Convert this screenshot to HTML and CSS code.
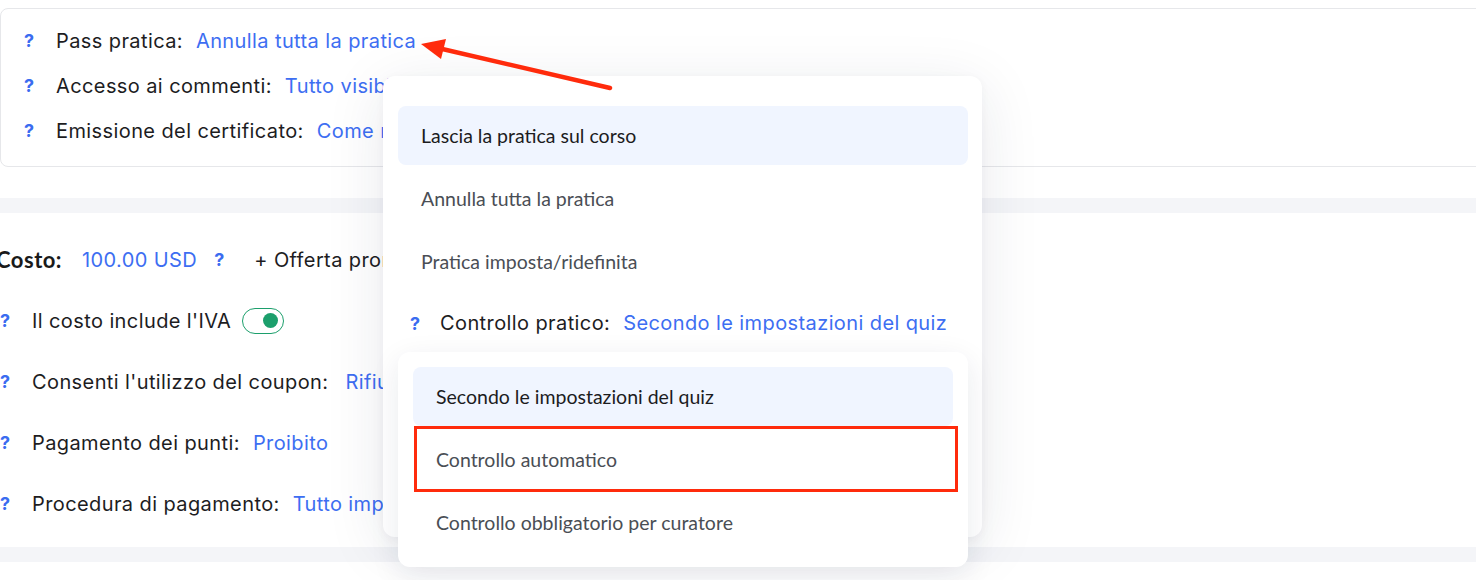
FILE: index.html
```html
<!DOCTYPE html>
<html lang="it">
<head>
<meta charset="utf-8">
<title>Impostazioni corso</title>
<link rel="stylesheet" href="styles.css">
</head>
<body>
<div class="page">
  <section class="card top-card">
    <div class="row">
      <span class="q">?</span>
      <span class="label">Pass pratica:</span>
      <span class="value">Annulla tutta la pratica</span>
    </div>
    <div class="row">
      <span class="q">?</span>
      <span class="label">Accesso ai commenti:</span>
      <span class="value">Tutto visibile</span>
    </div>
    <div class="row">
      <span class="q">?</span>
      <span class="label">Emissione del certificato:</span>
      <span class="value">Come richiesto</span>
    </div>
  </section>

  <div class="band"></div>

  <section class="card2">
    <div class="row2">
      <span class="cost-label">Costo:</span>
      <span class="cost-value">100.00 USD</span>
      <span class="q q-inline">?</span>
      <span class="offer">+ Offerta promozionale</span>
    </div>
    <div class="row2">
      <span class="q">?</span>
      <span class="label">Il costo include l'IVA</span>
      <span class="toggle"><span class="knob"></span></span>
    </div>
    <div class="row2">
      <span class="q">?</span>
      <span class="label">Consenti l'utilizzo del coupon:</span>
      <span class="value value-wide">Rifiutato</span>
    </div>
    <div class="row2">
      <span class="q">?</span>
      <span class="label">Pagamento dei punti:</span>
      <span class="value">Proibito</span>
    </div>
    <div class="row2">
      <span class="q">?</span>
      <span class="label">Procedura di pagamento:</span>
      <span class="value">Tutto impostato</span>
    </div>
  </section>

  <div class="band"></div>

  <div class="dropdown outer">
    <div class="item selected">Lascia la pratica sul corso</div>
    <div class="item">Annulla tutta la pratica</div>
    <div class="item">Pratica imposta/ridefinita</div>
    <div class="ctrl-row">
      <span class="q q-ctrl">?</span>
      <span class="label">Controllo pratico:</span>
      <span class="value">Secondo le impostazioni del quiz</span>
    </div>
    <div class="dropdown inner">
      <div class="item selected">Secondo le impostazioni del quiz</div>
      <div class="item marked">Controllo automatico</div>
      <div class="item">Controllo obbligatorio per curatore</div>
    </div>
  </div>

  <svg class="arrow" width="1476" height="580" viewBox="0 0 1476 580" aria-hidden="true">
    <line x1="610" y1="88" x2="438" y2="48" stroke="#ff2b0c" stroke-width="4.5" stroke-linecap="round"/>
    <polygon points="421,44 446,39 441,59" fill="#ff2b0c"/>
  </svg>
</div>
</body>
</html>
```

FILE: styles.css
```css
* {
  box-sizing: border-box;
}

html, body {
  margin: 0;
  padding: 0;
  background: #ffffff;
  overflow: hidden;
}

body {
  font-family: "Inter", "Liberation Sans", sans-serif;
  color: #1d1d1f;
}

.page {
  position: relative;
  width: 1476px;
  height: 580px;
  overflow: hidden;
}

.card {
  background: #ffffff;
}

.top-card {
  margin-top: 8px;
  margin-right: -20px;
  height: 159px;
  border: 1px solid #e6e7ea;
  border-radius: 8px;
  padding: 9px 0 0 23px;
}

.row {
  display: flex;
  align-items: center;
  height: 45px;
  font-size: 20px;
  letter-spacing: 0.4px;
  white-space: nowrap;
}

.q {
  display: inline-block;
  width: 32px;
  flex: none;
  color: #3b6cf0;
  font-weight: 700;
  font-size: 18px;
  letter-spacing: 0;
}

.label {
  color: #1d1d1f;
}

.value {
  margin-left: 13px;
  color: #3d6ef2;
}

.value-wide {
  margin-left: 17px;
}

.band {
  margin-top: 31px;
  height: 15px;
  background: #f4f5f8;
}

.card2 + .band {
  margin-top: 0;
}

.card2 {
  height: 334px;
  padding: 16px 0 13px 0;
  background: #ffffff;
}

.row2 {
  display: flex;
  align-items: center;
  height: 61px;
  font-size: 20px;
  letter-spacing: 0.4px;
  white-space: nowrap;
}

.cost-label {
  margin-left: -4px;
  font-family: "Lato", "Liberation Sans", sans-serif;
  font-weight: 700;
  font-size: 22px;
  letter-spacing: 0.5px;
  color: #1a1a1a;
}

.cost-value {
  margin-left: 20px;
  color: #3d6ef2;
}

.q-inline {
  width: auto;
  margin-left: 17px;
}

.offer {
  margin-left: 30px;
  color: #1d1d1f;
}

.toggle {
  position: relative;
  display: inline-block;
  margin-left: 11px;
  width: 42px;
  height: 26px;
  border: 1.5px solid #1c9f6c;
  border-radius: 13px;
}

.knob {
  position: absolute;
  right: 5px;
  top: 4px;
  width: 15px;
  height: 15px;
  border-radius: 50%;
  background: #1c9f6c;
}

.dropdown {
  background: #ffffff;
  border-radius: 12px;
  font-family: "Lato", "Liberation Sans", sans-serif;
}

.outer {
  position: absolute;
  left: 383px;
  top: 76px;
  width: 599px;
  height: 461px;
  padding: 30px 14px 0 15px;
  box-shadow: 0 12px 60px rgba(25, 35, 70, 0.10), 0 2px 10px rgba(25, 35, 70, 0.04);
}

.item {
  position: relative;
  display: flex;
  align-items: center;
  height: 59px;
  margin-bottom: 4px;
  padding-left: 23px;
  border-radius: 8px;
  font-size: 19.5px;
  color: #4a4e55;
}

.item.selected {
  background: #f0f5ff;
  color: #1c1c1e;
}

.ctrl-row {
  display: flex;
  align-items: center;
  height: 56px;
  padding-left: 12px;
  font-family: "Inter", "Liberation Sans", sans-serif;
  font-size: 20px;
  letter-spacing: 0.4px;
  white-space: nowrap;
}

.q-ctrl {
  width: 30px;
}

.inner {
  position: absolute;
  left: 15px;
  top: 276px;
  width: 570px;
  height: 215px;
  padding: 15px;
  box-shadow: 0 8px 30px rgba(25, 35, 70, 0.09);
}

.item.marked::after {
  content: "";
  position: absolute;
  top: -4px;
  right: -5px;
  bottom: -3px;
  left: 1px;
  border: 3px solid #ff2b0c;
}

.arrow {
  position: absolute;
  left: 0;
  top: 0;
  pointer-events: none;
}
```
